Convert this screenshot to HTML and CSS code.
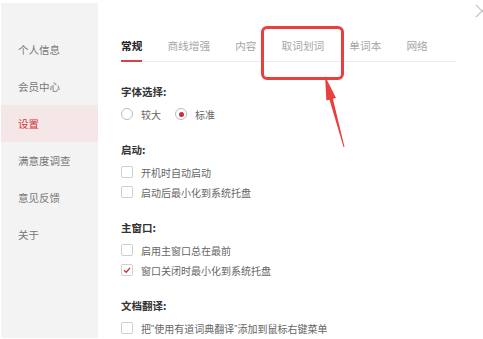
FILE: index.html
```html
<!DOCTYPE html>
<html lang="zh">
<head>
<meta charset="utf-8">
<title>设置</title>
<link rel="stylesheet" href="styles.css">
</head>
<body>
<div class="window">
  <aside class="sidebar">
    <div class="nav-item">个人信息</div>
    <div class="nav-item">会员中心</div>
    <div class="nav-item active">设置</div>
    <div class="nav-item">满意度调查</div>
    <div class="nav-item">意见反馈</div>
    <div class="nav-item">关于</div>
  </aside>
  <main class="content">
    <nav class="tabs">
      <span class="tab active">常规</span>
      <span class="tab">商线增强</span>
      <span class="tab">内容</span>
      <span class="tab">取词划词</span>
      <span class="tab">单词本</span>
      <span class="tab">网络</span>
    </nav>
    <section class="group">
      <h3 class="group-title">字体选择:</h3>
      <div class="row radios">
        <label class="opt"><span class="radio"></span>较大</label>
        <label class="opt"><span class="radio checked"></span>标准</label>
      </div>
    </section>
    <section class="group">
      <h3 class="group-title">启动:</h3>
      <div class="row"><span class="check"></span>开机时自动启动</div>
      <div class="row"><span class="check"></span>启动后最小化到系统托盘</div>
    </section>
    <section class="group">
      <h3 class="group-title">主窗口:</h3>
      <div class="row"><span class="check"></span>启用主窗口总在最前</div>
      <div class="row"><span class="check checked"><svg viewBox="0 0 12 12" width="12" height="12"><path d="M3 6.2 L5.2 8.2 L9 3.8" fill="none" stroke="#c9303b" stroke-width="1.3"/></svg></span>窗口关闭时最小化到系统托盘</div>
    </section>
    <section class="group">
      <h3 class="group-title">文档翻译:</h3>
      <div class="row"><span class="check"></span>把<span class="q">"</span>使用有道词典翻译<span class="q">"</span>添加到鼠标右键菜单</div>
    </section>
  </main>
  <div class="annot-box"></div>
  <svg class="annot-arrow" width="483" height="339" viewBox="0 0 483 339">
    <polygon points="325,76 336,97.9 332.9,98.7 344.5,147 343.5,147.1 329.5,99.7 326.4,100.5" fill="#e8403f"/>
  </svg>
  <svg class="close" width="14" height="14" viewBox="0 0 14 14">
    <path d="M1 1 L13 13 M13 1 L1 13" stroke="#c4c4c4" stroke-width="1.2"/>
  </svg>
</div>
</body>
</html>
```
FILE: styles.css
```css
html, body {
  margin: 0;
  height: 100%;
  overflow: hidden;
  background: #fff;
}
body {
  font-family: "Noto Sans CJK SC", "Microsoft YaHei", sans-serif;
}
.window {
  position: relative;
  display: flex;
  width: 483px;
  height: 339px;
  padding: 3px 0 0 1px;
  box-sizing: border-box;
}
.sidebar {
  width: 97px;
  height: 335px;
  flex: none;
  background: #f4f3f3;
  padding-top: 28px;
  box-sizing: border-box;
}
.nav-item {
  height: 37px;
  line-height: 37px;
  padding-left: 17px;
  font-size: 10.5px;
  color: #777;
}
.nav-item.active {
  background: #f5e7e7;
  color: #d2343c;
}
.content {
  flex: 1;
  padding: 0 27px 0 23px;
}
.tabs {
  display: flex;
  gap: 25px;
  margin-top: 31px;
  border-bottom: 1px solid #ededed;
}
.tab {
  position: relative;
  font-size: 10.7px;
  line-height: 24px;
  padding-bottom: 3px;
  color: #a6a6a6;
}
.tab.active {
  color: #222;
  font-weight: bold;
}
.tab.active::after {
  content: "";
  position: absolute;
  left: 0;
  right: 0;
  bottom: -1px;
  height: 2px;
  background: #d44249;
}
.group {
  margin-top: 16px;
}
.tabs + .group {
  margin-top: 20px;
}
.group-title {
  margin: 0 0 2px;
  font-size: 10.5px;
  line-height: 20px;
  font-weight: bold;
  color: #333;
}
.row {
  display: flex;
  align-items: center;
  height: 20px;
  font-size: 10px;
  color: #666;
  white-space: pre;
}
.q {
  font-family: "Liberation Sans", sans-serif;
  font-size: 9px;
}
.radios {
  gap: 14px;
}
.opt {
  display: flex;
  align-items: center;
}
.radio {
  width: 12px;
  height: 12px;
  box-sizing: border-box;
  border: 1px solid #bdbdbd;
  border-radius: 50%;
  margin-right: 8px;
  display: flex;
  align-items: center;
  justify-content: center;
}
.radio.checked::after {
  content: "";
  width: 5px;
  height: 5px;
  border-radius: 50%;
  background: #c9303b;
}
.check {
  width: 12px;
  height: 12px;
  box-sizing: border-box;
  border: 1px solid #cfcfcf;
  border-radius: 2px;
  margin-right: 8px;
  display: flex;
  align-items: center;
  justify-content: center;
  flex: none;
}
.check svg {
  display: block;
  margin: -1px;
}
.annot-box {
  position: absolute;
  left: 261px;
  top: 26px;
  width: 83px;
  height: 54px;
  box-sizing: border-box;
  border: 3px solid #e8403f;
  border-radius: 6px;
}
.annot-arrow {
  position: absolute;
  left: 0;
  top: 0;
  pointer-events: none;
}
.close {
  position: absolute;
  left: 475px;
  top: 4px;
}
```
